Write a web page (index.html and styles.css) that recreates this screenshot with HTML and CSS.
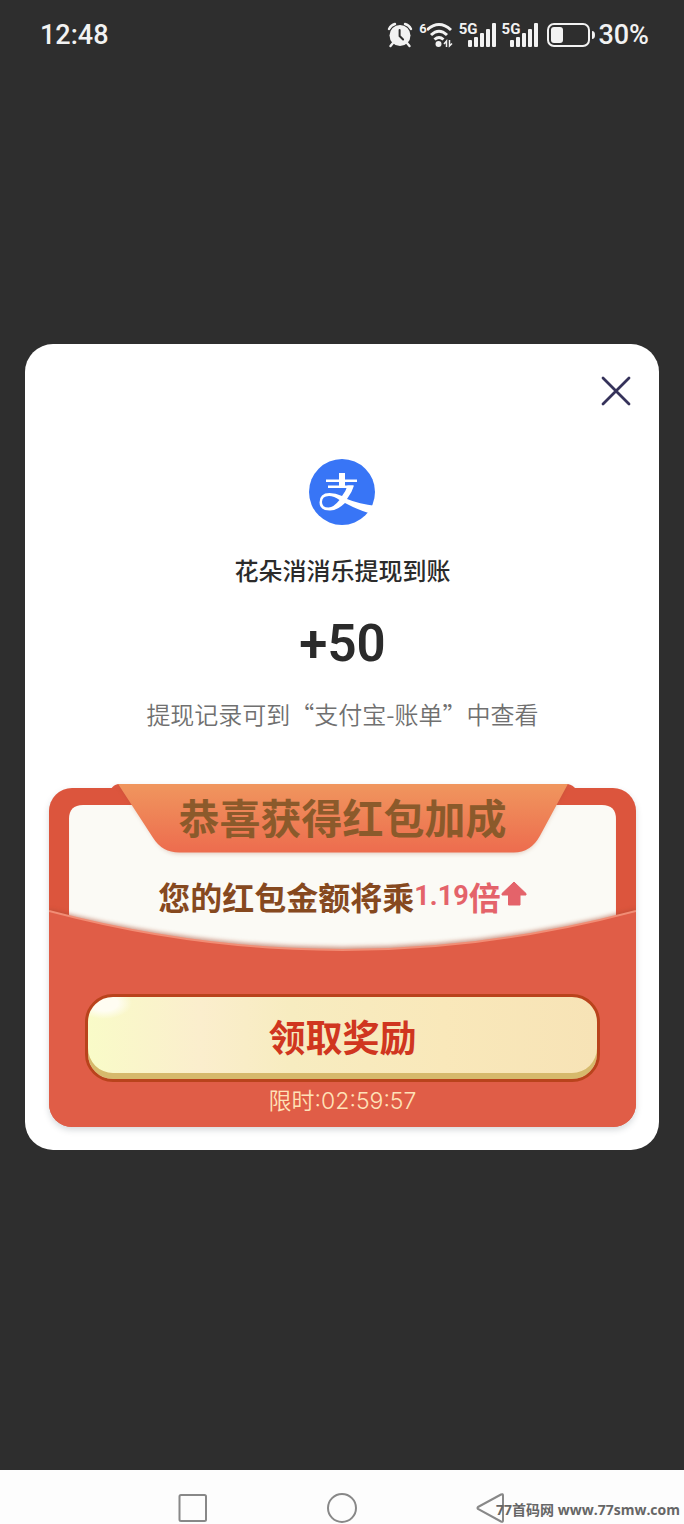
FILE: index.html
```html
<!DOCTYPE html>
<html lang="zh-CN">
<head>
<meta charset="utf-8">
<meta name="viewport" content="width=device-width, initial-scale=1">
<title>提现到账</title>
<link rel="stylesheet" href="styles.css">
</head>
<body>
<div class="screen">
  <header class="status">
    <time class="clock">12:48</time>
    <div class="indicators">
      <svg width="26" height="26" viewBox="0 0 26 26" aria-hidden="true">
        <circle cx="13" cy="13.500" r="10.500" fill="#f2f2f2"/>
        <path d="M2 7Q4 3 8 2M18 2q4 1 6 5M6 21l-2.500 3M20 21l2.500 3" fill="none" stroke="#f2f2f2" stroke-width="2.400" stroke-linecap="round"/>
        <path d="M12.600 8v6l3.500 3.500" fill="none" stroke="#2e2e2e" stroke-width="2" stroke-linecap="round"/>
      </svg>
      <div class="wifi">
        <span class="tag">6</span>
        <svg width="26" height="26" viewBox="0 0 26 26" aria-hidden="true">
          <g fill="none" stroke="#f2f2f2" stroke-width="3">
            <path d="M0 8Q12-3 24 8M4 13Q12 5.500 20 13M7.500 17.500q4.500-4 9 0"/>
            <path d="M19.500 25v-6l-2.500 3M22.500 18v6l2.500-2.500" stroke-width="1.500"/>
          </g>
          <circle cx="11.500" cy="22" r="3" fill="#f2f2f2"/>
        </svg>
      </div>
      <div class="signal">
        <span class="tag">5G</span>
        <svg width="28" height="24" viewBox="0 0 28 24" fill="#f2f2f2" aria-hidden="true">
          <rect x="0" y="17" width="4" height="7" rx="1"/><rect x="6" y="14" width="4" height="10" rx="1"/><rect x="12" y="10" width="4" height="14" rx="1"/><rect x="18" y="6" width="4" height="18" rx="1"/><rect x="24" y="0" width="4" height="24" rx="1"/>
        </svg>
      </div>
      <div class="signal">
        <span class="tag">5G</span>
        <svg width="28" height="24" viewBox="0 0 28 24" fill="#f2f2f2" aria-hidden="true">
          <rect x="0" y="17" width="4" height="7" rx="1"/><rect x="6" y="14" width="4" height="10" rx="1"/><rect x="12" y="10" width="4" height="14" rx="1"/><rect x="18" y="6" width="4" height="18" rx="1"/><rect x="24" y="0" width="4" height="24" rx="1"/>
        </svg>
      </div>
      <svg class="battery" width="48" height="24" viewBox="0 0 48 24" aria-hidden="true">
        <rect x="1" y="1" width="41" height="22" rx="6" fill="none" stroke="#f2f2f2" stroke-width="2"/>
        <rect x="4" y="4" width="12" height="16" rx="3" fill="#f2f2f2"/>
        <path d="M45 8q3 0 3 4t-3 4z" fill="#f2f2f2"/>
      </svg>
      <span class="percent">30%</span>
    </div>
  </header>

  <main class="stage">
    <section class="dialog" role="dialog" aria-labelledby="dialog-title">
      <button class="close" type="button" aria-label="关闭">
        <svg width="30" height="30" viewBox="0 0 30 30" fill="none" stroke="#35325a" stroke-width="2.800" stroke-linecap="round"><path d="M2 2l26 26M28 2L2 28"/></svg>
      </button>
      <svg class="logo" width="68" height="68" viewBox="0 0 68 68" role="img" aria-label="支付宝">
        <circle cx="33" cy="34" r="33" fill="#3875f6"/>
        <g fill="#fff">
          <path d="M30 15h6v13h-6zM17 21.500h31v2.500H17zM19 27.500h25v2.500H19z"/>
          <path d="M38.500 27.500h6.500q-2 7-7 13.500 12 5 29 7-2 5-4.500 8Q49 52 36 45q-8 7.500-15 7.500-10.500 0-10.500-8 0-9.500 10-9.500 6 0 12.500 3 4-5 5.500-10.500zM30.500 42q-5.500-4-10.500-4-7 0-7 6 0 5.500 6.500 5.500 5 0 11-7.500z"/>
        </g>
      </svg>
      <h1 class="title" id="dialog-title">花朵消消乐提现到账</h1>
      <p class="amount">+50</p>
      <p class="note">提现记录可到“支付宝-账单”中查看</p>

      <div class="envelope">
        <svg class="envelope-art" viewBox="0 0 586 343" preserveAspectRatio="none" aria-hidden="true">
          <defs>
            <linearGradient id="ribbon" x1="0" y1="0" x2="0" y2="1"><stop offset="0" stop-color="#f0965e"/><stop offset="1" stop-color="#ed6c4e"/></linearGradient>
            <filter id="soft" x="-10%" y="-20%" width="120%" height="140%"><feGaussianBlur stdDeviation="2"/></filter>
            <clipPath id="shape"><rect y="4" width="586" height="339" rx="23"/></clipPath>
          </defs>
          <path d="M62 5q2-4 7-5h449q5 1 8 5z" fill="#dc5740"/>
          <rect y="4" width="586" height="339" rx="23" fill="#dc553d"/>
          <path d="M20 180V35q0-14 14-14h518q14 0 14 14v145z" fill="#fbfaf5"/>
          <g clip-path="url(#shape)">
            <path d="M0 125Q293 201 586 125v90H0z" fill="#a8462f" opacity=".55" filter="url(#soft)"/>
            <path d="M0 127Q293 205 586 127V343H0z" fill="#e05d47"/>
            <path d="M0 127Q293 205 586 127" fill="none" stroke="#f18d75" stroke-width="2"/>
          </g>
          <path d="M69 1L105 54Q114 70 130 70H463Q480 70 489 54L518 1z" fill="#9b5030" opacity=".25" filter="url(#soft)"/>
          <path d="M69 0h449L490 52Q481 68.500 464 68.500H130Q113 68.500 104 54z" fill="url(#ribbon)"/>
        </svg>
        <div class="envelope-body">
          <h2 class="ribbon-text">恭喜获得红包加成</h2>
          <p class="bonus"><span>您的红包金额将乘</span><span class="rate"><span class="rate-number">1.19</span><span>倍</span></span><svg width="26" height="26" viewBox="0 0 26 26" aria-hidden="true"><path d="M13 1L25 12.500V14h-6v10H7.500V14H1v-1.500z" fill="#e4636a" stroke="#e4636a" stroke-linejoin="round"/></svg></p>
          <button class="claim" type="button">领取奖励</button>
          <p class="countdown">限时:02:59:57</p>
        </div>
      </div>
    </section>
  </main>

  <nav class="system-nav" aria-label="系统导航">
    <button type="button" aria-label="最近任务"><svg width="30" height="30" viewBox="0 0 30 30"><rect x="1.500" y="2" width="26.500" height="26" rx="1.500"/></svg></button>
    <button type="button" aria-label="主页"><svg width="30" height="30" viewBox="0 0 30 30"><circle cx="15" cy="15" r="14"/></svg></button>
    <button type="button" aria-label="返回"><svg width="30" height="30" viewBox="0 0 30 30"><path d="M2 14L25 1.500q2-1 2 1v25q0 2-2 1L2 16q-1-1 0-2z"/></svg></button>
    <p class="watermark">77首码网 www.77smw.com</p>
  </nav>
</div>
</body>
</html>
```

FILE: styles.css
```css
* { box-sizing: border-box; }
body, h1, h2, p { margin: 0; }
body {
  background: #2e2e2e;
  font-family: "Noto Sans CJK SC", sans-serif;
}
button { border: 0; padding: 0; background: none; font: inherit; cursor: pointer; }
svg { display: block; flex: none; }

.screen { min-height: 100vh; display: flex; flex-direction: column; }

.status {
  height: 70px;
  padding: 0 35px 0 40px;
  display: flex;
  justify-content: space-between;
  align-items: center;
  color: #f2f2f2;
  font-family: Roboto, sans-serif;
  font-size: 27px;
  font-weight: 500;
}
.indicators { display: flex; align-items: center; gap: 6px; }
.wifi, .signal { display: flex; align-items: flex-start; }
.tag { font-size: 15px; line-height: 13px; font-weight: 700; }
.wifi .tag { font-size: 13px; }
.signal .tag { margin-right: -10px; }
.battery { margin-left: 3px; }
.percent { margin-left: -3px; }

.stage { flex: 1; padding: 274px 25px 40px; }
.dialog {
  background: #fff;
  border-radius: 28px;
  padding: 32px 23px 23px 24px;
  display: flex;
  flex-direction: column;
  align-items: center;
}
.close { align-self: flex-end; margin-right: 5px; }
.logo { margin-top: 52px; }
.title { margin-top: 26px; font-size: 24px; line-height: 36px; font-weight: 500; color: #2b2b2b; }
.amount {
  margin-top: 26px;
  font-family: Roboto, sans-serif;
  font-size: 51px;
  line-height: 60px;
  font-weight: 600;
  color: #2b2b2b;
}
.note { margin-top: 22px; font-size: 24px; line-height: 36px; font-weight: 350; color: #707070; white-space: nowrap; }

.envelope { align-self: stretch; margin-top: 52px; display: grid; }
.envelope-art, .envelope-body { grid-area: 1 / 1; }
.envelope-art {
  width: 100%;
  height: 0;
  min-height: 100%;
  filter: drop-shadow(0 3px 3px #00102028);
}
.envelope-body {
  position: relative;
  display: flex;
  flex-direction: column;
  align-items: center;
  padding: 2px 36px 10px;
}
.ribbon-text { font-size: 41px; line-height: 60px; font-weight: 700; color: #8b5a2b; }
.bonus {
  margin-top: 28px;
  display: flex;
  align-items: center;
  font-size: 32px;
  line-height: 44px;
  font-weight: 700;
  color: #86491f;
  white-space: nowrap;
}
.bonus svg { margin-bottom: 4px; }
.rate { display: flex; color: #e4636a; }
.rate-number { font-family: Roboto, sans-serif; font-size: 27px; }
.claim {
  align-self: stretch;
  height: 88px;
  margin-top: 76px;
  padding-bottom: 4px;
  border: 3px solid #b9431c;
  border-radius: 28px;
  background:
    radial-gradient(ellipse 28px 16px at 16px 6px, #fffdf2 50%, transparent 100%),
    linear-gradient(90deg, #f9fbc8 0%, #fbeecd 22%, #f7ecc0 40%, #f9e8ba 70%, #f7e3b6 100%);
  box-shadow: inset 0 -6px 0 #d6b96c;
  color: #d0361f;
  font-size: 37px;
  line-height: 52px;
  font-weight: 700;
}
.countdown {
  margin-top: 4px;
  font-family: Inter, "Noto Sans CJK SC", sans-serif;
  font-size: 23px;
  line-height: 31px;
  font-weight: 350;
  color: #ffe2b8;
}

.system-nav {
  position: relative;
  height: 54px;
  padding-top: 23px;
  background: #fdfdfd;
  display: flex;
  justify-content: center;
  gap: 119px;
}
.system-nav button { height: 30px; }
.system-nav svg { fill: none; stroke: #888; stroke-width: 2; overflow: visible; }
.watermark {
  position: absolute;
  right: 4px;
  bottom: 4px;
  font-family: "Open Sans", "Noto Sans CJK SC", sans-serif;
  font-size: 14px;
  line-height: 20px;
  font-weight: 700;
  color: #666;
  white-space: nowrap;
}
```
